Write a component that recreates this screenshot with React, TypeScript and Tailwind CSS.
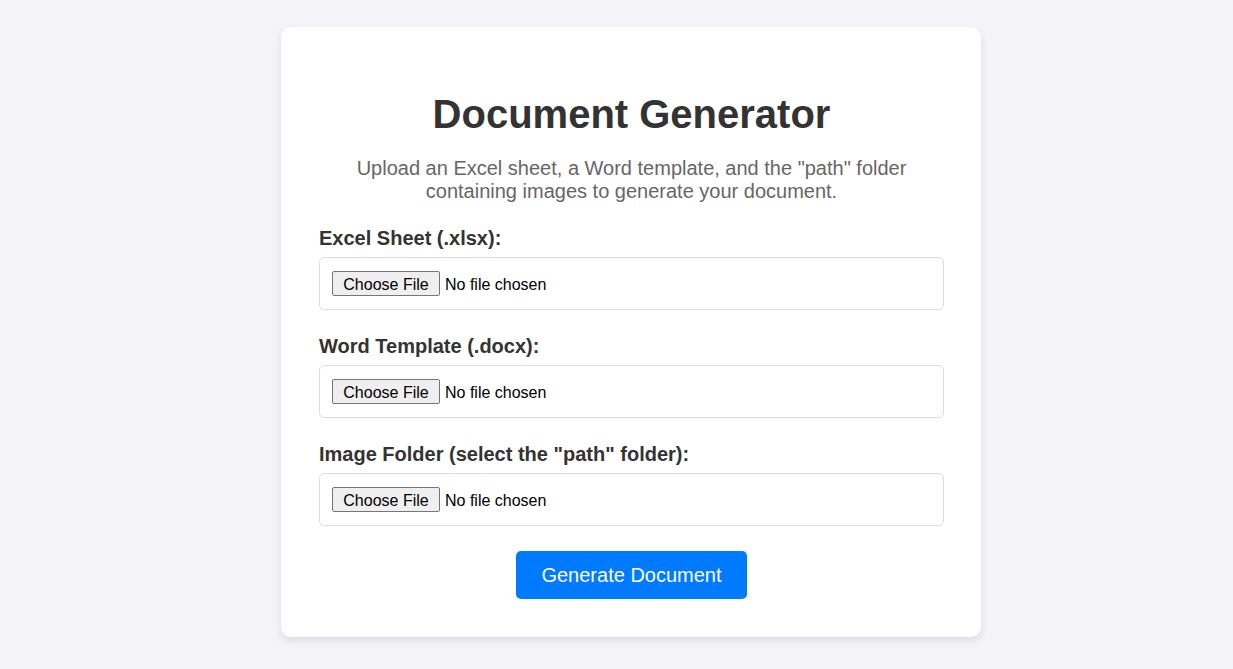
import React from "react";

function Field({ label }: { label: string }) {
  return (
    <div className="flex flex-col">
      <label className="text-[20px] leading-[23px] font-bold text-[#333]">{label}</label>
      <input
        type="file"
        className="mt-[7px] box-border w-full h-[53px] px-[12px] py-[13px] border border-[#ddd] rounded-[5px] bg-white text-[16px] leading-[25px] text-black file:h-[25px] file:w-[108px] file:px-0 file:mr-[5px] file:border file:border-solid file:border-[#767676] file:rounded-[2px] file:bg-[#efefef] file:text-black file:text-[16px]"
      />
    </div>
  );
}

export default function App() {
  return (
    <div className="min-h-[669px] w-full bg-[#f4f4f9] font-['Liberation_Sans',Arial,sans-serif] flex justify-center pl-[29px] pt-[27px] pb-[32px]">
      <div className="w-[700px] h-[610px] bg-white rounded-[10px] shadow-[0_4px_10px_rgba(0,0,0,0.1)] pl-[38px] pr-[37px] pt-[64px] flex flex-col">
        <h1 className="text-[40px] leading-[46px] font-bold text-[#333] text-center">Document Generator</h1>
        <p className="mt-[20px] text-[20px] leading-[23px] text-[#666] text-center px-[20px]">
          Upload an Excel sheet, a Word template, and the "path" folder containing images to generate your document.
        </p>
        <div className="mt-[24px] flex flex-col gap-[25px]">
          <Field label="Excel Sheet (.xlsx):" />
          <Field label="Word Template (.docx):" />
          <Field label={'Image Folder (select the "path" folder):'} />
        </div>
        <div className="mt-[25px] flex justify-center">
          <button className="h-[48px] px-[25px] bg-[#007bff] text-white text-[20px] rounded-[5px]">
            Generate Document
          </button>
        </div>
      </div>
    </div>
  );
}
